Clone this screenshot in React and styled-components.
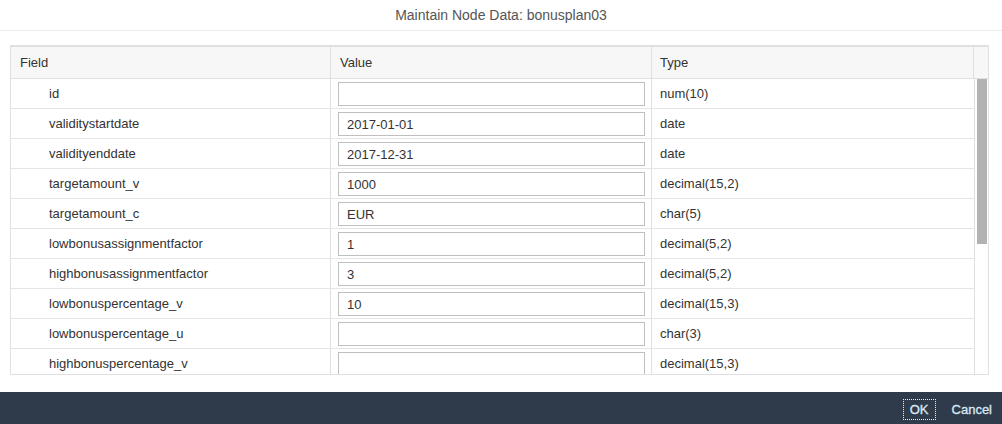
import styled, { createGlobalStyle } from "styled-components"

const GlobalStyle = createGlobalStyle`
    html, body {
        margin: 0;
        padding: 0;
        background: #fff;
        font-family: "Liberation Sans", Arial, sans-serif;
    }
`

const Dialog = styled.div`
    display: flex;
    flex-direction: column;
    width: 1002px;
    height: 424px;
    background: #fff;
    overflow: hidden;
`
const TitleBar = styled.div`
    height: 31px;
    border-bottom: 1px solid #ebebeb;
    display: flex;
    align-items: center;
    justify-content: center;
    font-size: 14px;
    color: #555;
    padding-bottom: 1px;
    box-sizing: border-box;
`
const Content = styled.div`
    flex: 1;
    padding: 14px 13px 0 10px;
`
const Table = styled.div`
    border: 1px solid #e0e0e0;
    border-top-width: 2px;
    height: 330px;
    box-sizing: border-box;
    overflow: hidden;
`
const HeaderRow = styled.div`
    display: grid;
    grid-template-columns: 320px 321px 322px 1fr;
    height: 31px;
    background: #f7f7f7;
    border-bottom: 1px solid #e0e0e0;
`
const HeadCell = styled.div`
    display: flex;
    align-items: center;
    padding-left: ${p => p.$pad || 9}px;
    font-size: 13px;
    color: #333;
    border-right: ${p => p.$last ? "none" : "1px solid #e0e0e0"};
`
const Body = styled.div`
    display: flex;
`
const Rows = styled.div`
    width: 963px;
    flex: none;
`
const Row = styled.div`
    display: grid;
    grid-template-columns: 320px 321px 322px;
    height: 30px;
    border-bottom: 1px solid #e5e5e5;
    box-sizing: border-box;
`
const Cell = styled.div`
    display: flex;
    align-items: center;
    padding-left: ${p => p.$pad || 8}px;
    font-size: 13px;
    color: #333;
    border-right: ${p => p.$last ? "none" : "1px solid #e0e0e0"};
`
const Input = styled.input`
    width: 307px;
    height: 24px;
    box-sizing: border-box;
    border: 1px solid #bfbfbf;
    border-radius: 0;
    padding: 0 8px;
    font-family: "Liberation Sans", Arial, sans-serif;
    font-size: 13px;
    color: #333;
    outline: none;
    margin-top: 1px;
`
const ScrollTrack = styled.div`
    flex: 1;
    border-left: 1px solid #e0e0e0;
    padding: 0 3px 0 2px;
`
const Thumb = styled.div`
    width: 10px;
    height: 165px;
    background: #b2b2b2;
`
const Footer = styled.div`
    height: 32px;
    background: #2f3b4a;
    display: flex;
    align-items: center;
    justify-content: flex-end;
    gap: 15px;
    padding-right: 9px;
`
const FooterButton = styled.button`
    background: transparent;
    border: 1px dotted ${p => p.$focused ? "#e8eef5" : "transparent"};
    color: #dbe7f4;
    font-family: "Liberation Sans", Arial, sans-serif;
    font-size: 13px;
    font-weight: 400;
    -webkit-text-stroke: 0.3px #dbe7f4;
    height: 21px;
    padding: 0 ${p => p.$focused ? 6 : 0}px;
    cursor: pointer;
    margin-top: 3px;
`

const fields = [
    { name: "id", value: "", type: "num(10)" },
    { name: "validitystartdate", value: "2017-01-01", type: "date" },
    { name: "validityenddate", value: "2017-12-31", type: "date" },
    { name: "targetamount_v", value: "1000", type: "decimal(15,2)" },
    { name: "targetamount_c", value: "EUR", type: "char(5)" },
    { name: "lowbonusassignmentfactor", value: "1", type: "decimal(5,2)" },
    { name: "highbonusassignmentfactor", value: "3", type: "decimal(5,2)" },
    { name: "lowbonuspercentage_v", value: "10", type: "decimal(15,3)" },
    { name: "lowbonuspercentage_u", value: "", type: "char(3)" },
    { name: "highbonuspercentage_v", value: "", type: "decimal(15,3)" },
]

export default function App() {
    return (
        <Dialog>
            <GlobalStyle />
            <TitleBar>Maintain Node Data: bonusplan03</TitleBar>
            <Content>
                <Table>
                    <HeaderRow>
                        <HeadCell>Field</HeadCell>
                        <HeadCell>Value</HeadCell>
                        <HeadCell $pad={8}>Type</HeadCell>
                        <HeadCell $last />
                    </HeaderRow>
                    <Body>
                        <Rows>
                            {fields.map(f => (
                                <Row key={f.name}>
                                    <Cell $pad={38}>{f.name}</Cell>
                                    <Cell $pad={7}>
                                        <Input defaultValue={f.value} />
                                    </Cell>
                                    <Cell $last>{f.type}</Cell>
                                </Row>
                            ))}
                        </Rows>
                        <ScrollTrack>
                            <Thumb />
                        </ScrollTrack>
                    </Body>
                </Table>
            </Content>
            <Footer>
                <FooterButton $focused>OK</FooterButton>
                <FooterButton>Cancel</FooterButton>
            </Footer>
        </Dialog>
    )
}
